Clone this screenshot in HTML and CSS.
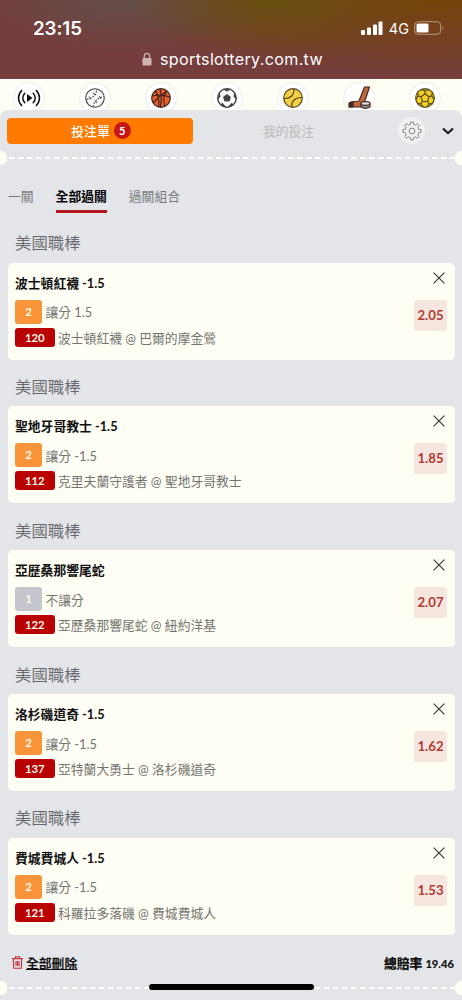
FILE: index.html
```html
<!DOCTYPE html>
<html lang="zh-Hant">
<head>
<meta charset="utf-8">
<title>投注單</title>
<link rel="stylesheet" href="styles.css">
</head>
<body>
<div class="screen">
  <header class="browser">
    <div class="status">
      <span class="clock">23:15</span>
      <div class="signals">
        <svg class="bars" width="22" height="14" viewBox="0 0 22 14" fill="#fff"><rect x="0" y="9" width="4" height="5" rx="1"/><rect x="6" y="6.500" width="4" height="7.500" rx="1"/><rect x="12" y="3.500" width="4" height="10.500" rx="1"/><rect x="17.500" y="0.500" width="4" height="13.500" rx="1"/></svg>
        <span class="net">4G</span>
        <svg width="31" height="14" viewBox="0 0 31 14"><rect x=".7" y=".7" width="26" height="12.600" rx="3.500" fill="none" stroke="#b99a82" stroke-width="1"/><rect x="2.500" y="2.500" width="12" height="9" rx="1.500" fill="#fff"/><path d="M28.500 4.500q1.800 2.500 0 5z" fill="#b99a82"/></svg>
      </div>
    </div>
    <div class="address">
      <svg width="10" height="14" viewBox="0 0 10 14"><path d="M2.300 7V4a2.700 2.700 0 0 1 5.400 0v3" fill="none" stroke="#d1b4b6" stroke-width="1.300"/><rect x=".5" y="6" width="9" height="7.500" rx="1.200" fill="#d1b4b6"/></svg>
      <span>sportslottery.com.tw</span>
    </div>
  </header>

  <nav class="sports">
    <span class="sport"><svg viewBox="0 0 30 30" fill="none" stroke="#111" stroke-width="1.500" stroke-linecap="round"><path d="M13 11v8l5.500-4z" fill="#111" stroke="none"/><path d="M10.800 10.300a6.500 6.500 0 0 0 0 9.400M7.600 7.600a10.500 10.500 0 0 0 0 14.800M19.200 10.300a6.500 6.500 0 0 1 0 9.400M22.400 7.600a10.500 10.500 0 0 1 0 14.800"/></svg></span>
    <span class="sport"><svg viewBox="0 0 30 30" fill="none" stroke="#444" stroke-width="1.100"><circle cx="15" cy="15" r="9.300" fill="#f7f7f5"/><path d="M6.500 16.500q9-1.500 10.500-10.500M13 24q1.500-8.500 10.800-10.500" stroke-dasharray="1.800 1.300"/><path d="M9 13.500l2 3M13 10l3 2M15 17.500l2 2.500M19 13l2 3" stroke-width=".9"/></svg></span>
    <span class="sport"><svg viewBox="0 0 30 30" fill="none" stroke="#40231b" stroke-width="1.200"><circle cx="15" cy="15" r="9.300" fill="#e5602d"/><path d="M6 13q9-2 18 1M14 5.800q2.500 9 .2 18.400M9 8q5 5 3.500 15.800M21 8q-5 5-2.200 15.300M7 20q6-7 14-12"/></svg></span>
    <span class="sport"><svg viewBox="0 0 30 30" stroke="#3e4244" stroke-width="1.300"><circle cx="15" cy="15" r="9.300" fill="#fff"/><path d="M15 11.800l3.200 2.400-1.200 3.600h-4l-1.200-3.600z" fill="#3e4244"/><path d="M11.500 6.200h7L15 8.300zM22.500 10l1.800 6.500-2.500-3zM7.500 10l-1.800 6.500 2.500-3zM9 22.200l5 2-3.700-4.300zM21 22.200l-5 2 3.700-4.300z" fill="#3e4244" stroke-width=".6"/></svg></span>
    <span class="sport"><svg viewBox="0 0 30 30" fill="none" stroke="#52451e" stroke-width="1.200"><circle cx="15" cy="15" r="9.300" fill="#f4cf43"/><path d="M6 15.500q10 .5 10-9.800M13.500 24q0-9.500 10.700-9.500"/></svg></span>
    <span class="sport"><svg viewBox="0 0 30 30" stroke="#4a2a1d" stroke-width="1.200" stroke-linejoin="round"><path d="M20.500 4h5l-5 15-1 2.500q-.7 2.500-3 2.500H5.500v-3q0-2 2-2l7.500-1z" fill="#bd693b"/><path d="M5 20l4-1.500V24H5z" fill="#382d27"/><path d="M17 20.500v3.300q4.300 3 9 0v-3.300" fill="#8e9b9f"/><ellipse cx="21.500" cy="20.500" rx="4.500" ry="1.800" fill="#dce2e2"/></svg></span>
    <span class="sport"><svg viewBox="0 0 30 30" fill="none" stroke="#5a4b18" stroke-width="1.200"><circle cx="15" cy="15" r="9.300" fill="#efcf25"/><path d="M15 10.800l4 3-1.500 4.700h-5L11 13.800zM15 10.800V8l-4-1.500M15 8l4-1.500M19 13.800l2.700-1 .8-4M21.700 12.800l2.500 3.500M17.500 18.500l1.700 2.300 3.800-.2M19.200 20.800l-2.500 3.200M12.500 18.500l-1.700 2.300-3.800-.2M10.800 20.800l2.500 3.200M11 13.800l-2.700-1-.8-4M8.300 12.800l-2.500 3.500"/></svg></span>
  </nav>

  <main class="slip">
    <div class="switch">
      <button class="on">投注單<b class="count">5</b></button>
      <button class="off">我的投注</button>
      <span class="gear"><svg width="20" height="20" viewBox="0 0 20 20" fill="none" stroke="#777b7f" stroke-width=".9" stroke-linejoin="round"><circle cx="10" cy="10" r="2.900"/><path d="M8.300 3.300 8.700 1h2.600l.4 2.300 1.900.8 1.900-1.400 1.800 1.800-1.400 1.900.8 1.900 2.300.4v2.600l-2.300.4-.8 1.900 1.400 1.900-1.800 1.800-1.900-1.400-1.900.8-.4 2.300H8.700l-.4-2.300-1.900-.8-1.900 1.400-1.800-1.800 1.400-1.900-.8-1.900L1 11.300V8.700l2.300-.4.8-1.900-1.400-1.900 1.800-1.800 1.900 1.400z"/></svg></span>
      <svg class="chev" width="12" height="8" viewBox="0 0 12 8" fill="none" stroke="#111" stroke-width="2"><path d="M1 1.500l5 4.700 5-4.700"/></svg>
    </div>
    <div class="tear"><svg width="462" height="14"><path d="M9 7H455" stroke="#fff" stroke-width="2" stroke-dasharray="5.500 3.500"/><circle cx="0" cy="7" r="7.300"/><circle cx="462" cy="7" r="7.300"/></svg></div>
    <div class="tabs"><span>一關</span><span class="active">全部過關</span><span>過關組合</span></div>

    <section class="group"><h2>美國職棒</h2>
      <article class="bet"><h3>波士頓紅襪 -1.5</h3><p><i class="pick">2</i>讓分 1.5</p><p><i class="code">120</i>波士頓紅襪 @ 巴爾的摩金鶯</p>
      <div class="side"><svg class="close" viewBox="0 0 12 12"><path d="M.6.6l10.800 10.800M11.400.6L.6 11.400"/></svg><span class="odds">2.05</span></div></article></section>
    <section class="group"><h2>美國職棒</h2>
      <article class="bet"><h3>聖地牙哥教士 -1.5</h3><p><i class="pick">2</i>讓分 -1.5</p><p><i class="code">112</i>克里夫蘭守護者 @ 聖地牙哥教士</p>
      <div class="side"><svg class="close" viewBox="0 0 12 12"><path d="M.6.6l10.800 10.800M11.400.6L.6 11.400"/></svg><span class="odds">1.85</span></div></article></section>
    <section class="group"><h2>美國職棒</h2>
      <article class="bet"><h3>亞歷桑那響尾蛇</h3><p><i class="pick plain">1</i>不讓分</p><p><i class="code">122</i>亞歷桑那響尾蛇 @ 紐約洋基</p>
      <div class="side"><svg class="close" viewBox="0 0 12 12"><path d="M.6.6l10.800 10.800M11.400.6L.6 11.400"/></svg><span class="odds">2.07</span></div></article></section>
    <section class="group"><h2>美國職棒</h2>
      <article class="bet"><h3>洛杉磯道奇 -1.5</h3><p><i class="pick">2</i>讓分 -1.5</p><p><i class="code">137</i>亞特蘭大勇士 @ 洛杉磯道奇</p>
      <div class="side"><svg class="close" viewBox="0 0 12 12"><path d="M.6.6l10.800 10.800M11.400.6L.6 11.400"/></svg><span class="odds">1.62</span></div></article></section>
    <section class="group"><h2>美國職棒</h2>
      <article class="bet"><h3>費城費城人 -1.5</h3><p><i class="pick">2</i>讓分 -1.5</p><p><i class="code">121</i>科羅拉多落磯 @ 費城費城人</p>
      <div class="side"><svg class="close" viewBox="0 0 12 12"><path d="M.6.6l10.800 10.800M11.400.6L.6 11.400"/></svg><span class="odds">1.53</span></div></article></section>

    <div class="totals">
      <svg width="11" height="13" viewBox="0 0 11 13" fill="none" stroke="#c8323a" stroke-width="1.100"><path d="M0 2.600h11M3.500 2.400V.7h4v1.700M1.300 2.800l.4 9.500h7.600l.4-9.500M4 5v5M5.500 5v5M7 5v5"/></svg>
      <u>全部刪除</u><strong>總賠率 <small>19.46</small></strong>
    </div>
    <div class="tear last"><svg width="462" height="14"><path d="M9 7H455" stroke="#fff" stroke-width="2" stroke-dasharray="5.500 3.500"/><circle cx="0" cy="7" r="7.300"/><circle cx="462" cy="7" r="7.300"/></svg></div>
  </main>
  <div class="home"></div>
</div>
</body>
</html>
```

FILE: styles.css
```css
* { box-sizing: border-box; margin: 0; padding: 0; }
body { width: 462px; height: 1000px; overflow: hidden; font-family: Lato, "Noto Sans CJK TC", sans-serif; font-size: 12.8px; }
.screen { position: relative; width: 462px; height: 1000px; overflow: hidden; background: #fffef5; }
svg { display: block; flex: none; }

.browser {
  height: 79px; color: #fff; font-family: Inter, sans-serif;
  background:
    radial-gradient(ellipse 150px 60px at 275px 0, #6b5011 0%, rgba(107, 80, 17, 0) 100%),
    radial-gradient(ellipse 150px 55px at 125px 0, #634f4c 0%, rgba(99, 79, 76, 0) 100%),
    radial-gradient(ellipse 270px 75px at 430px 0, #754308 0%, rgba(117, 67, 8, 0) 100%),
    #753d3b;
}
.status { display: flex; justify-content: space-between; align-items: center; height: 44px; padding: 12px 17px 0 33px; }
.clock { font-size: 18.8px; font-weight: 600; letter-spacing: -.1px; }
.signals { display: flex; align-items: center; }
.net { margin: 0 5px 0 6px; font-size: 14.5px; }
.address { display: flex; align-items: center; height: 29px; padding-left: 142px; gap: 8px; font-size: 16.1px; letter-spacing: .33px; }

.sports { display: flex; justify-content: space-between; height: 31px; padding: 3.5px 21.500px 0 14px; overflow: hidden; }
.sport { width: 30px; height: 30px; flex: none; border-radius: 50%; background: #fff; box-shadow: 0 0 1.500px 0.500px #dedfe3; }
.sport svg { width: 30px; height: 30px; }

.slip { height: 890px; border-radius: 8px 8px 0 0; background: #e3e5e8; }
.switch { display: flex; align-items: center; height: 41px; padding: 0 8px 0 7px; }
.switch button { height: 26px; border: 0; font: inherit; font-size: 12.8px; }
.on { display: flex; align-items: center; justify-content: center; gap: 4px; width: 186px; padding-left: 2px !important; border-radius: 4px; background: #ff7a00; color: #fff; }
.switch .on { font-weight: 500; }
.count { width: 17px; height: 17px; border-radius: 50%; background: #c51618; font-size: 11px; line-height: 17px; text-align: center; }
.off { width: 191px; background: none; color: #b8babc; }
.gear { display: flex; align-items: center; justify-content: center; width: 27px; height: 27px; margin-left: 14px; border-radius: 50%; background: #f0f1f3; }
.chev { margin-left: auto; }
.tear { height: 14px; }
.tear circle { fill: #fffef5; }

.tabs { display: flex; gap: 22px; height: 57.200px; padding: 22.500px 0 0 8px; line-height: 17px; color: #76797c; }
.tabs span { height: 25px; }
.tabs .active { color: #000; font-weight: 700; border-bottom: 3px solid #b4181f; }

.group { height: 143.800px; padding: 0 7.500px; }
.group h2 { height: 40.500px; padding-left: 7.500px; line-height: 41.500px; font-size: 16.400px; font-weight: 350; color: #646669; }
.bet { display: grid; grid-template-columns: 1fr 34px; grid-template-rows: 27px 26px 25px; height: 97px; padding: 9px 7.500px 0; border-radius: 5px; background: #fffef5; }
.bet h3 { grid-column: 1; font-size: 12.800px; line-height: 23px; font-weight: 700; color: #111; }
.bet p { grid-column: 1; display: flex; align-items: center; font-weight: 400; color: #747570; white-space: pre; }
.bet i { font-style: normal; font-weight: 700; color: #fffbe9; text-align: center; border-radius: 3px; }
.pick { width: 27px; height: 24px; margin-right: 3.500px; line-height: 24px; font-size: 11.500px; background: #fa943b; }
.pick.plain { background: #c5c5cd; }
.code { width: 39.500px; height: 19px; margin-right: 3.500px; line-height: 19px; font-size: 11.300px; background: #b90003; }
.side { grid-column: 2; grid-row: 1 / 4; display: flex; flex-direction: column; align-items: flex-end; }
.close { width: 12px; height: 12px; margin-right: 2px; fill: none; stroke: #333; stroke-width: 1.100; }
.odds { width: 33px; height: 31px; margin-top: 16px; border-radius: 3px; background: #f7e6df; color: #b13a32; font-weight: 700; font-size: 13.200px; line-height: 31px; text-align: center; }

.totals { display: flex; align-items: center; height: 39.800px; padding: 3px 8px 0 12px; font-weight: 700; color: #111; }
.totals u { margin-left: 3px; text-underline-offset: 1px; }
.totals strong { margin-left: auto; font-size: 12.800px; }
.totals small { font-size: 11.200px; }
.home { position: absolute; left: 149px; top: 984px; width: 165px; height: 6px; border-radius: 3px; background: #000; }
```
